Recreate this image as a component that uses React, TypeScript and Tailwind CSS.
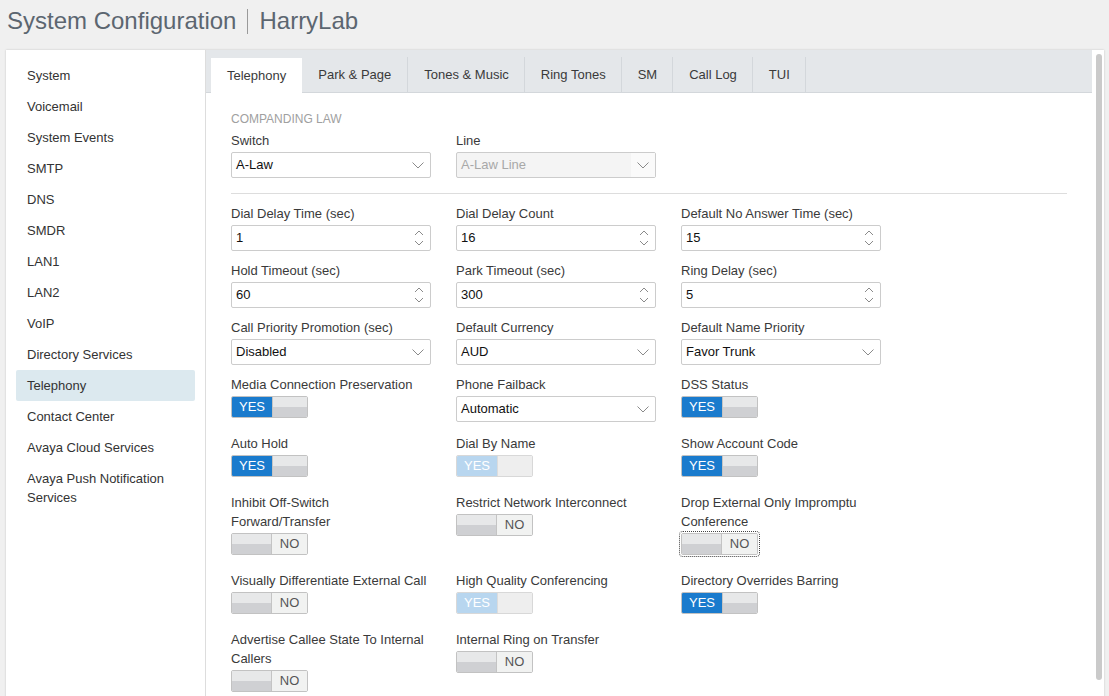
import clsx from 'clsx'

const navItems = [
  'System',
  'Voicemail',
  'System Events',
  'SMTP',
  'DNS',
  'SMDR',
  'LAN1',
  'LAN2',
  'VoIP',
  'Directory Services',
  'Telephony',
  'Contact Center',
  'Avaya Cloud Services',
  'Avaya Push Notification Services',
]

const tabs = ['Telephony', 'Park & Page', 'Tones & Music', 'Ring Tones', 'SM', 'Call Log', 'TUI']

type Field =
  | { label: string; kind: 'number'; value: string }
  | { label: string; kind: 'select'; value: string }
  | { label: string; kind: 'toggle'; on: boolean; disabled?: boolean; focus?: boolean }
  | null

const rows: Field[][] = [
  [
    { label: 'Dial Delay Time (sec)', kind: 'number', value: '1' },
    { label: 'Dial Delay Count', kind: 'number', value: '16' },
    { label: 'Default No Answer Time (sec)', kind: 'number', value: '15' },
  ],
  [
    { label: 'Hold Timeout (sec)', kind: 'number', value: '60' },
    { label: 'Park Timeout (sec)', kind: 'number', value: '300' },
    { label: 'Ring Delay (sec)', kind: 'number', value: '5' },
  ],
  [
    { label: 'Call Priority Promotion (sec)', kind: 'select', value: 'Disabled' },
    { label: 'Default Currency', kind: 'select', value: 'AUD' },
    { label: 'Default Name Priority', kind: 'select', value: 'Favor Trunk' },
  ],
  [
    { label: 'Media Connection Preservation', kind: 'toggle', on: true },
    { label: 'Phone Failback', kind: 'select', value: 'Automatic' },
    { label: 'DSS Status', kind: 'toggle', on: true },
  ],
  [
    { label: 'Auto Hold', kind: 'toggle', on: true },
    { label: 'Dial By Name', kind: 'toggle', on: true, disabled: true },
    { label: 'Show Account Code', kind: 'toggle', on: true },
  ],
  [
    { label: 'Inhibit Off-Switch Forward/Transfer', kind: 'toggle', on: false },
    { label: 'Restrict Network Interconnect', kind: 'toggle', on: false },
    { label: 'Drop External Only Impromptu Conference', kind: 'toggle', on: false, focus: true },
  ],
  [
    { label: 'Visually Differentiate External Call', kind: 'toggle', on: false },
    { label: 'High Quality Conferencing', kind: 'toggle', on: true, disabled: true },
    { label: 'Directory Overrides Barring', kind: 'toggle', on: true },
  ],
  [
    { label: 'Advertise Callee State To Internal Callers', kind: 'toggle', on: false },
    { label: 'Internal Ring on Transfer', kind: 'toggle', on: false },
    null,
  ],
]

const Chevron = () => (
  <svg width="12" height="7" viewBox="0 0 12 7" className="shrink-0">
    <polyline points="0.5,0.5 6,6 11.5,0.5" fill="none" stroke="#8a8a8a" strokeWidth="1" />
  </svg>
)

const Select = ({ value, disabled }: { value: string; disabled?: boolean }) => (
  <div
    className={clsx(
      'flex h-[26px] w-[200px] items-center rounded-[2px] border border-[#cccccc] text-[13px]',
      disabled ? 'bg-[#f4f4f4] text-[#a8a8a8]' : 'bg-white text-[#111]'
    )}
  >
    <span className="flex-1 pl-[4px]">{value}</span>
    <div className={clsx('flex h-full w-[24px] items-center justify-center', disabled && 'bg-[#fafafa]')}>
      <Chevron />
    </div>
  </div>
)

const NumberBox = ({ value }: { value: string }) => (
  <div className="flex h-[26px] w-[200px] items-center rounded-[2px] border border-[#cccccc] bg-white text-[13px] text-[#111]">
    <span className="flex-1 pl-[4px]">{value}</span>
    <svg width="10" height="18" viewBox="0 0 10 18" className="mr-[6px]">
      <polyline points="1,6 5,2 9,6" fill="none" stroke="#8a8a8a" strokeWidth="1" />
      <polyline points="1,12 5,16 9,12" fill="none" stroke="#8a8a8a" strokeWidth="1" />
    </svg>
  </div>
)

const Handle = ({ flat, side }: { flat?: boolean; side: 'l' | 'r' }) => (
  <div
    className={clsx(
      'h-full',
      side === 'l' ? 'w-[40px] border-r' : 'flex-1 border-l',
      flat
        ? 'border-[#dcdcdc] bg-[#eeeeee]'
        : 'border-[#c4c4c4] bg-[linear-gradient(#e7e8e9_50%,#cfd0d3_50%)]'
    )}
  />
)

const Toggle = ({ on, disabled, focus }: { on: boolean; disabled?: boolean; focus?: boolean }) => (
  <div
    className={clsx(
      'flex h-[22px] w-[77px] overflow-hidden rounded-[2px] border text-[13px] leading-[20px]',
      disabled ? 'border-[#d8d8d8]' : 'border-[#c2c2c2]',
      focus && 'outline-1 outline-offset-[1px] outline-dotted outline-[#444]'
    )}
  >
    {on ? (
      <>
        <div
          className={clsx(
            'w-[40px] text-center text-white',
            disabled ? 'bg-[#b8d6ef]' : 'bg-[#1a7bcd]'
          )}
        >
          YES
        </div>
        <Handle side="r" flat={disabled} />
      </>
    ) : (
      <>
        <Handle side="l" />
        <div className="flex-1 bg-[#f1f2f1] text-center text-[#555]">NO</div>
      </>
    )}
  </div>
)

const FieldCell = ({ f }: { f: Field }) => {
  if (!f) return <div />
  return (
    <div className="flex flex-col">
      <div className="text-[13px] leading-[19px] text-[#3a3a3a]">{f.label}</div>
      <div className="mt-[2px]">
        {f.kind === 'number' && <NumberBox value={f.value} />}
        {f.kind === 'select' && <Select value={f.value} />}
        {f.kind === 'toggle' && (
          <div className="h-[28px]">
            <Toggle on={f.on} disabled={f.disabled} focus={f.focus} />
          </div>
        )}
      </div>
    </div>
  )
}

export default function App() {
  return (
    <div className="flex h-[696px] flex-col overflow-hidden bg-[#f0f0f0] font-['Liberation_Sans',Arial,sans-serif]">
      {/* header */}
      <div className="flex h-[49px] shrink-0 items-start px-[7px] pt-[7px]">
        <div className="flex items-center text-[24px] leading-[28px] text-[#5c6670]">
          <span>System Configuration</span>
          <span className="mx-[11px] h-[25px] w-px bg-[#9a9a9a]" />
          <span>HarryLab</span>
        </div>
      </div>

      {/* panel */}
      <div className="ml-[6px] mr-[5px] mt-px flex flex-1 bg-white shadow-[0_0_2px_rgba(0,0,0,0.18)]">
        {/* sidebar */}
        <div className="w-[200px] shrink-0 border-r border-[#dddddd] px-[10px] pt-[10px]">
          {navItems.map((item) => (
            <div
              key={item}
              className={clsx(
                'rounded-[2px] py-[6px] pl-[11px] pr-[8px] text-[13px] leading-[19px] text-[#333]',
                item === 'Telephony' && 'bg-[#dce9ef]'
              )}
            >
              {item}
            </div>
          ))}
        </div>

        {/* content */}
        <div className="flex flex-1 flex-col">
          <div className="flex h-[43px] shrink-0 items-end border-b border-[#d3d7db] bg-[#e4e7ea] pl-[5px]">
            {tabs.map((t, i) => (
              <div
                key={t}
                className={clsx(
                  'flex h-[35px] items-center text-[13px] text-[#3a3a3a]',
                  i === 0 ? '-mb-px bg-white px-[16px]' : 'border-r border-[#d3d7db] px-[16px]',
                  i > 1 && 'pr-[15px]'
                )}
              >
                {t}
              </div>
            ))}
          </div>

          <div className="px-[25px] pt-[18px]">
            <div className="text-[12px] leading-[17px] text-[#a0a0a0]">COMPANDING LAW</div>
            <div className="mt-[3px] flex gap-[25px]">
              <div className="flex flex-col">
                <div className="text-[13px] leading-[19px] text-[#3a3a3a]">Switch</div>
                <div className="mt-[2px]">
                  <Select value="A-Law" />
                </div>
              </div>
              <div className="flex flex-col">
                <div className="text-[13px] leading-[19px] text-[#3a3a3a]">Line</div>
                <div className="mt-[2px]">
                  <Select value="A-Law Line" disabled />
                </div>
              </div>
            </div>
            <div className="mt-[15px] h-px bg-[#dddddd]" />

            <div className="mt-[10px] grid grid-cols-[200px_200px_200px] gap-x-[25px] gap-y-[10px]">
              {rows.flat().map((f, i) => (
                <FieldCell key={i} f={f} />
              ))}
            </div>
          </div>
        </div>

        {/* scrollbar */}
        <div className="w-[12px] shrink-0 pl-[4px] pt-[4px]">
          <div className="h-[626px] w-[6px] rounded-[3px] bg-[#cacaca]" />
        </div>
      </div>
    </div>
  )
}
